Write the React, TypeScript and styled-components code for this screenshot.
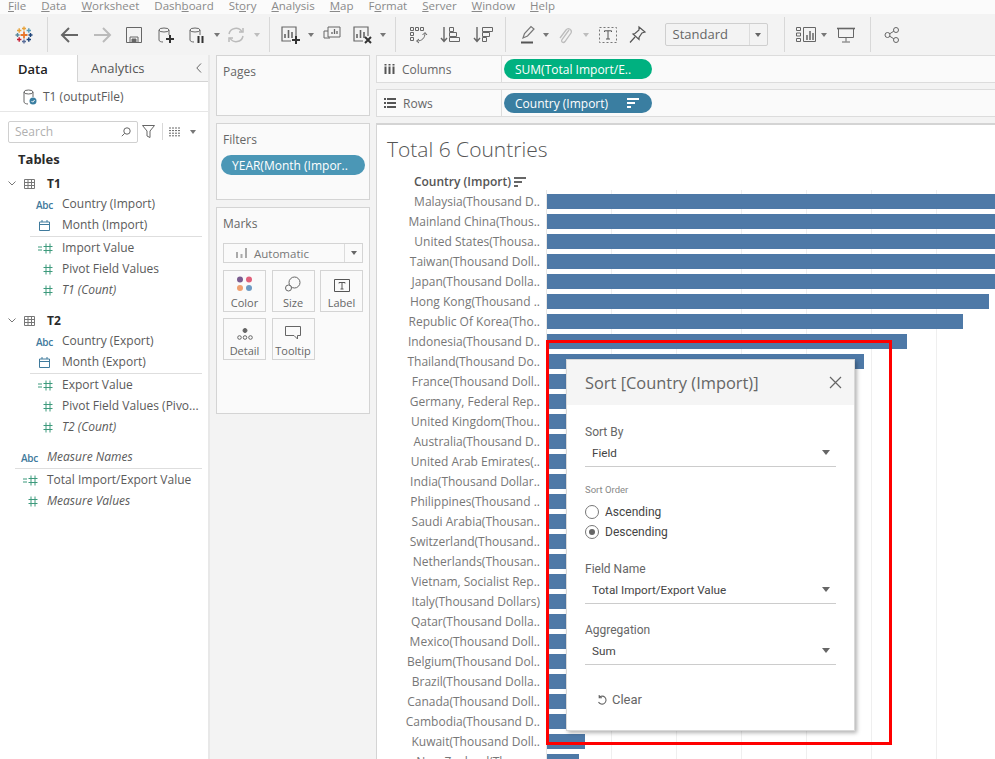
import React from 'react';
import styled, { createGlobalStyle } from 'styled-components';

const GlobalStyle = createGlobalStyle`
	html, body { margin: 0; padding: 0; background: #fff; }
	body { font-family: 'Open Sans', 'Liberation Sans', sans-serif; font-size: 12px; color: #555; }
	* { box-sizing: border-box; }
`;

const Page = styled.div`
	position: relative;
	width: 995px;
	height: 759px;
	overflow: hidden;
	display: flex;
	flex-direction: column;
	background: #f3f3f3;
`;

const MenuBar = styled.div`
	height: 14px;
	flex: none;
	display: flex;
	gap: 15px;
	padding-left: 8px;
	background: #fbfbfb;
	overflow: hidden;
	font-size: 11.5px;
	line-height: 11px;
	color: #8a8a8a;
	u { text-underline-offset: 1px; }
`;

const Toolbar = styled.div`
	height: 41px;
	flex: none;
	display: flex;
	align-items: center;
	background: #f3f3f3;
`;

const ToolSlot = styled.div<{ $w: number }>`
	width: ${(p) => p.$w}px;
	height: 32px;
	flex: none;
	display: flex;
	align-items: center;
	justify-content: center;
`;

const ToolSep = styled.div`
	width: 1px;
	height: 35px;
	flex: none;
	background: #d8d8d8;
`;

const Caret = styled.div<{ $off?: boolean; $dark?: boolean }>`
	width: 0;
	height: 0;
	border-left: 3.5px solid transparent;
	border-right: 3.5px solid transparent;
	border-top: 4px solid ${(p) => (p.$off ? '#bdbdbd' : p.$dark ? '#666' : '#777')};
`;

const ViewSelect = styled.div`
	width: 103px;
	height: 23px;
	margin: 0 16px 0 11.5px;
	flex: none;
	display: flex;
	align-items: center;
	border: 1px solid #cfcfcf;
	border-radius: 2px;
	font-size: 13px;
	color: #666;
	span { flex: 1; padding: 0 0 1px 7px; }
	div.end { width: 18px; height: 100%; border-left: 1px solid #dcdcdc; display: flex; align-items: center; justify-content: center; }
`;

const Body = styled.div`
	flex: 1;
	display: flex;
	min-height: 0;
`;

const DataPane = styled.div`
	width: 210px;
	flex: none;
	background: #fff;
	border-right: 2px solid #e8e8e8;
`;

const TabRow = styled.div`
	height: 27px;
	display: flex;
	align-items: center;
	background: #f5f5f5;
`;

const Tab = styled.div<{ $active?: boolean }>`
	height: 27px;
	width: ${(p) => (p.$active ? '78px' : 'auto')};
	flex: ${(p) => (p.$active ? 'none' : '1')};
	display: flex;
	align-items: center;
	padding-left: ${(p) => (p.$active ? '18px' : '13px')};
	padding-right: 6px;
	justify-content: ${(p) => (p.$active ? 'flex-start' : 'space-between')};
	font-size: 13px;
	font-weight: ${(p) => (p.$active ? 600 : 400)};
	color: ${(p) => (p.$active ? '#222' : '#555')};
	background: ${(p) => (p.$active ? '#fff' : '#f5f5f5')};
	border-right: ${(p) => (p.$active ? '1px solid #d4d4d4' : 'none')};
	border-bottom: ${(p) => (p.$active ? 'none' : '1px solid #d4d4d4')};
`;

const SourceRow = styled.div`
	height: 30px;
	display: flex;
	align-items: center;
	gap: 6px;
	padding-left: 23px;
	border-bottom: 1px solid #e6e6e6;
	color: #5a5a5a;
	font-size: 12px;
`;

const SearchRow = styled.div`
	height: 21px;
	margin-top: 9px;
	padding-left: 8px;
	display: flex;
	align-items: center;
`;

const SearchBox = styled.div`
	width: 130px;
	height: 22px;
	flex: none;
	display: flex;
	align-items: center;
	justify-content: space-between;
	padding: 0 6px;
	border: 1px solid #d0d0d0;
	border-radius: 2px;
	color: #b0b0b0;
	font-size: 12px;
`;

const SearchTools = styled.div`
	display: flex;
	align-items: center;
	gap: 6px;
	margin-left: 4px;
	i { width: 1px; height: 17px; background: #d8d8d8; margin: 0 0 0 1px; }
`;

const TablesTitle = styled.div`
	margin: 7px 0 4px 18px;
	height: 20px;
	line-height: 20px;
	font-weight: 700;
	font-size: 13px;
	color: #2a2a2a;
`;

const TableHead = styled.div<{ $gap?: number }>`
	height: 21px;
	margin-top: ${(p) => p.$gap ?? 0}px;
	display: flex;
	align-items: center;
	padding-left: 8px;
	gap: 8px;
	font-weight: 700;
	font-size: 12px;
	color: #2a2a2a;
	span { margin-left: 4px; }
`;

const FieldRow = styled.div<{ $outer?: boolean }>`
	height: 21px;
	display: flex;
	align-items: center;
	padding-left: ${(p) => (p.$outer ? '15px' : '30px')};
	white-space: nowrap;
`;

const FieldIcon = styled.div`
	width: 29px;
	flex: none;
	display: flex;
	align-items: center;
	justify-content: center;
`;

const AbcMark = styled.span`
	font-size: 10px;
	color: #3f7a9c;
	font-weight: 600;
	letter-spacing: -0.2px;
`;

const FieldName = styled.span<{ $italic?: boolean }>`
	margin-left: 3px;
	padding-bottom: 2px;
	font-size: 12px;
	color: #5a5a5a;
	font-style: ${(p) => (p.$italic ? 'italic' : 'normal')};
`;

const FieldRule = styled.div<{ $outer?: boolean }>`
	height: 1px;
	margin: 0 6px 1px ${(p) => (p.$outer ? '15px' : '30px')};
	background: #dedede;
`;

const GroupGap = styled.div`
	height: 9px;
`;

const CardColumn = styled.div`
	width: 166px;
	flex: none;
	padding: 0 6px 0 6px;
	display: flex;
	flex-direction: column;
`;

const Card = styled.div<{ $h: number; $mt?: number }>`
	height: ${(p) => p.$h}px;
	margin-top: ${(p) => p.$mt ?? 0}px;
	flex: none;
	padding: 7px 6px;
	background: #fafafa;
	border: 1px solid #d4d4d4;
	font-size: 12px;
	color: #666;
`;

const Pill = styled.div<{ $bg: string; $w: number }>`
	width: ${(p) => p.$w}px;
	height: 20px;
	flex: none;
	display: flex;
	align-items: center;
	justify-content: space-between;
	padding: 0 12px 0 11px;
	border-radius: 10px;
	background: ${(p) => p.$bg};
	color: #fff;
	font-size: 12px;
	white-space: nowrap;
`;

const FilterPill = styled(Pill)`
	margin: 7px 0 0 -2px;
`;

const MarkSelect = styled.div`
	height: 20px;
	margin-top: 11px;
	display: flex;
	align-items: center;
	background: #fafafa;
	border: 1px solid #d4d4d4;
	font-size: 11.5px;
	color: #777;
	span { flex: 1; padding-left: 12px; display: flex; align-items: center; gap: 7px; }
	div.end { width: 18px; height: 100%; border-left: 1px solid #dcdcdc; display: flex; align-items: center; justify-content: center; }
`;

const MarkGrid = styled.div`
	display: grid;
	grid-template-columns: repeat(3, 43px);
	grid-auto-rows: 42px;
	column-gap: 5.5px;
	row-gap: 6px;
	margin-top: 7px;
`;

const MarkTile = styled.div`
	display: flex;
	flex-direction: column;
	align-items: center;
	justify-content: flex-end;
	padding-bottom: 1px;
	gap: 3px;
	background: #fafafa;
	border: 1px solid #d4d4d4;
	font-size: 11px;
	color: #666;
`;

const MainColumn = styled.div`
	flex: 1;
	min-width: 0;
	display: flex;
	flex-direction: column;
`;

const Shelf = styled.div<{ $mt?: number }>`
	height: 28px;
	margin-top: ${(p) => p.$mt ?? 0}px;
	flex: none;
	display: flex;
	align-items: center;
	background: #fafafa;
	border: 1px solid #dcdcdc;
	border-right: none;
`;

const ShelfLabel = styled.div`
	width: 125px;
	height: 100%;
	flex: none;
	display: flex;
	align-items: center;
	gap: 7px;
	padding-left: 7px;
	margin-right: 2px;
	border-right: 1px solid #dcdcdc;
	font-size: 12px;
	color: #666;
`;

const ViewPane = styled.div`
	flex: 1;
	margin-top: 6px;
	min-height: 0;
	padding: 11px 0 0 10px;
	background: #fff;
	border-top: 2px solid #d4d4d4;
	border-left: 1px solid #d4d4d4;
	overflow: hidden;
`;

const ViewTitle = styled.div`
	height: 27px;
	line-height: 27px;
	font-size: 21px;
	font-weight: 300;
	color: #555;
`;

const ColumnHead = styled.div`
	width: 140px;
	height: 17px;
	margin-top: 10px;
	display: flex;
	align-items: center;
	justify-content: flex-end;
	gap: 3px;
	font-size: 12px;
	font-weight: 600;
	color: #555;
	white-space: nowrap;
`;

const ChartRow = styled.div`
	height: 20px;
	display: flex;
	margin-left: -1px;
`;

const RowLabel = styled.div`
	width: 160px;
	flex: none;
	padding: 3px 6px 0 0;
	text-align: right;
	font-size: 12px;
	line-height: 18px;
	color: #777;
	white-space: nowrap;
	overflow: hidden;
`;

const Plot = styled.div`
	flex: 1;
	padding-top: 4px;
	border-left: 1px solid #e6e6e6;
	background: repeating-linear-gradient(to right, transparent 0 64px, #efefef 64px 65px);
`;

const Bar = styled.div`
	height: 15px;
	background: #4e79a7;
`;

const Dialog = styled.div`
	position: absolute;
	left: 566px;
	top: 359px;
	width: 289px;
	height: 372px;
	background: #fff;
	border: 1px solid #d8d8d8;
	box-shadow: 2px 2px 4px rgba(0, 0, 0, 0.3);
	font-family: Roboto, 'Liberation Sans', sans-serif;
`;

const DialogHead = styled.div`
	height: 45px;
	display: flex;
	align-items: center;
	justify-content: space-between;
	padding: 0 12px 0 18px;
	background: #f5f5f5;
	font-family: 'Open Sans', sans-serif;
	font-size: 16.4px;
	color: #666;
`;

const DialogBody = styled.div`
	padding: 19px 18px 0 18px;
`;

const SelectLabel = styled.div<{ $mt?: number }>`
	height: 16px;
	margin-top: ${(p) => p.$mt ?? 0}px;
	line-height: 16px;
	font-size: 12px;
	color: #666;
`;

const SelectLine = styled.div`
	height: 27px;
	display: flex;
	align-items: center;
	justify-content: space-between;
	padding: 0 6px 1px 7px;
	border-bottom: 1px solid #cccccc;
	font-size: 11.7px;
	color: #444;
`;

const SelectCaret = styled.div`
	width: 0;
	height: 0;
	border-left: 4.5px solid transparent;
	border-right: 4.5px solid transparent;
	border-top: 5px solid #666;
`;

const SmallLabel = styled.div`
	margin-top: 17px;
	height: 12px;
	line-height: 12px;
	font-size: 9.5px;
	color: #888;
`;

const RadioRow = styled.div`
	height: 20px;
	display: flex;
	align-items: center;
	gap: 6px;
	font-size: 12px;
	color: #444;
`;

const RadioDot = styled.div<{ $on?: boolean }>`
	width: 14px;
	height: 14px;
	flex: none;
	border-radius: 50%;
	border: 1px solid #777;
	display: flex;
	align-items: center;
	justify-content: center;
	&::after {
		content: '';
		width: 6px;
		height: 6px;
		border-radius: 50%;
		background: ${(p) => (p.$on ? '#666' : 'transparent')};
	}
`;

const RadioGroup = styled.div`
	margin-top: 6px;
`;

const ClearButton = styled.div`
	margin: 27px 0 0 11px;
	display: flex;
	align-items: center;
	gap: 4px;
	font-size: 13px;
	color: #666;
`;

const RedBox = styled.div`
	position: absolute;
	left: 546px;
	top: 340px;
	width: 346px;
	height: 405px;
	border: 3px solid #f00;
	pointer-events: none;
`;

const Svg = ({ w = 20, h = 20, children }: { w?: number; h?: number; children: React.ReactNode }) => (
	<svg width={w} height={h} viewBox={`0 0 ${w} ${h}`} fill='none' stroke='#666' strokeWidth='1'>
		{children}
	</svg>
);

const cross = (x: number, y: number, r: number, c: string, sw = 1.4) => (
	<path d={`M${x - r} ${y}H${x + r}M${x} ${y - r}V${y + r}`} stroke={c} strokeWidth={sw} />
);

const TableauLogo = () => (
	<Svg w={18} h={18}>
		{cross(9, 9, 3.5, '#e8762b', 1.8)}
		{cross(9, 2.5, 2, '#e8a33b')}
		{cross(9, 15.5, 2, '#5b6f9a')}
		{cross(2.5, 9, 2, '#59879b')}
		{cross(15.5, 9, 2, '#1f447a')}
		{cross(4.2, 4.5, 2.2, '#e8a33b')}
		{cross(13.8, 4.5, 2.2, '#5a9bb5')}
		{cross(4.2, 13.5, 2.2, '#c72035')}
		{cross(13.8, 13.5, 2.2, '#1f447a')}
	</Svg>
);

const Cylinder = ({ c = '#666' }: { c?: string }) => (
	<g stroke={c}>
		<ellipse cx='7' cy='4' rx='5' ry='2' />
		<path d='M2 4V14C2 15.3 4 16 6 16M12 4V9' />
	</g>
);

const BarsFrame = ({ x = 1 }: { x?: number }) => (
	<g>
		<path d={`M${x + 14} 11V2H${x}V16H${x + 9}`} strokeWidth='1.2' />
		<path d={`M${x + 3} 13V9M${x + 6.5} 13V5M${x + 10} 13V7`} strokeWidth='1.6' />
	</g>
);

const SortLines = ({ stroke = '#666' }: { stroke?: string }) => (
	<svg width='13' height='10' viewBox='0 0 13 10' fill='none' stroke={stroke} strokeWidth='2'>
		<path d='M0 1H12M0 5H8M0 9H4' />
	</svg>
);

const Hash = ({ calc }: { calc?: boolean }) => (
	<svg width='16' height='11' viewBox='0 0 16 11' fill='none' stroke='#3d9a7c' strokeWidth='1'>
		<path d='M9 0.5V10.5M13 0.5V10.5M6.5 3.5H15.5M6.5 7.5H15.5' />
		{calc && <path d='M1 4H5M1 7H5' />}
	</svg>
);

const CalendarMark = () => (
	<svg width='11' height='11' viewBox='0 0 11 11' fill='none' stroke='#3f7a9c' strokeWidth='1'>
		<path d='M.5 2H10.5V10.5H.5ZM.5 4.5H10.5M3 0V2M8 0V2' />
	</svg>
);

const TableMark = () => (
	<svg width='11' height='10' viewBox='0 0 11 10' fill='none' stroke='#777' strokeWidth='1'>
		<path d='M.5 .5H10.5V9.5H.5ZM.5 3.5H10.5M.5 6.5H10.5M4 .5V9.5M7.5 .5V9.5' />
	</svg>
);

const Chevron = () => (
	<svg width='8' height='5' viewBox='0 0 8 5' fill='none' stroke='#777' strokeWidth='1'>
		<path d='M.5 .5L4 4L7.5 .5' />
	</svg>
);

type Field = { kind: 'abc' | 'date' | 'hash' | 'calc'; name: string; italic?: boolean };

const FieldLine = ({ field, outer }: { field: Field; outer?: boolean }) => (
	<FieldRow $outer={outer}>
		<FieldIcon>
			{field.kind === 'abc' && <AbcMark>Abc</AbcMark>}
			{field.kind === 'date' && <CalendarMark />}
			{field.kind === 'hash' && <Hash />}
			{field.kind === 'calc' && <Hash calc />}
		</FieldIcon>
		<FieldName $italic={field.italic}>{field.name}</FieldName>
	</FieldRow>
);

const rows: [string, number][] = [
	['Malaysia(Thousand D..', 460],
	['Mainland China(Thous..', 460],
	['United States(Thousa..', 460],
	['Taiwan(Thousand Doll..', 460],
	['Japan(Thousand Dolla..', 460],
	['Hong Kong(Thousand ..', 442],
	['Republic Of Korea(Tho..', 416],
	['Indonesia(Thousand D..', 360],
	['Thailand(Thousand Do..', 317],
	['France(Thousand Doll..', 120],
	['Germany, Federal Rep..', 110],
	['United Kingdom(Thou..', 100],
	['Australia(Thousand D..', 95],
	['United Arab Emirates(..', 90],
	['India(Thousand Dollar..', 85],
	['Philippines(Thousand ..', 80],
	['Saudi Arabia(Thousan..', 75],
	['Switzerland(Thousand..', 70],
	['Netherlands(Thousan..', 66],
	['Vietnam, Socialist Rep..', 62],
	['Italy(Thousand Dollars)', 58],
	['Qatar(Thousand Dolla..', 54],
	['Mexico(Thousand Doll..', 50],
	['Belgium(Thousand Dol..', 48],
	['Brazil(Thousand Dolla..', 46],
	['Canada(Thousand Doll..', 44],
	['Cambodia(Thousand D..', 42],
	['Kuwait(Thousand Doll..', 38],
	['New Zealand(Thousa..', 32],
];

const menus: [string, string, string][] = [
	['', 'F', 'ile'],
	['', 'D', 'ata'],
	['', 'W', 'orksheet'],
	['Dash', 'b', 'oard'],
	['St', 'o', 'ry'],
	['', 'A', 'nalysis'],
	['', 'M', 'ap'],
	['F', 'o', 'rmat'],
	['', 'S', 'erver'],
	['', 'W', 'indow'],
	['', 'H', 'elp'],
];

export default function App() {
	return (
		<Page>
			<GlobalStyle />
			<MenuBar>
				{menus.map(([a, b, c]) => (
					<span key={a + b + c}>
						{a}
						<u>{b}</u>
						{c}
					</span>
				))}
			</MenuBar>

			<Toolbar>
				<ToolSlot $w={47}><TableauLogo /></ToolSlot>
				<ToolSep />
				<ToolSlot $w={6} />
				<ToolSlot $w={32}>
					<Svg><path d='M2 10H18M9 3L2 10L9 17' strokeWidth='2' /></Svg>
				</ToolSlot>
				<ToolSlot $w={32}>
					<Svg><path d='M2 10H18M11 3L18 10L11 17' stroke='#bbb' strokeWidth='2' /></Svg>
				</ToolSlot>
				<ToolSlot $w={32}>
					<Svg w={16} h={16}><path d='M.5 .5H15.5V15.5H.5ZM4 15V10H12V15' /><path d='M6 12H10V15H6Z' fill='#666' /></Svg>
				</ToolSlot>
				<ToolSlot $w={31}>
					<Svg w={18} h={18}><Cylinder /><path d='M9 13H17M13 9V17' stroke='#333' strokeWidth='2' /></Svg>
				</ToolSlot>
				<ToolSlot $w={31}>
					<Svg w={18} h={18}><Cylinder /><path d='M10.5 10V17M14.5 10V17' stroke='#333' strokeWidth='2' /></Svg>
				</ToolSlot>
				<ToolSlot $w={9}><Caret /></ToolSlot>
				<ToolSlot $w={30}>
					<Svg w={18} h={18}>
						<path d='M2 8A7 7 0 0 1 15 6M16 10A7 7 0 0 1 3 12' stroke='#bbb' strokeWidth='1.5' />
						<path d='M16 2V6H12M2 16V12H6' stroke='#bbb' strokeWidth='1.5' />
					</Svg>
				</ToolSlot>
				<ToolSlot $w={11}><Caret $off /></ToolSlot>
				<ToolSlot $w={7} />
				<ToolSep />
				<ToolSlot $w={10} />
				<ToolSlot $w={21}>
					<Svg><BarsFrame x={1} /><path d='M11 15H19M15 11V19' stroke='#333' strokeWidth='2' /></Svg>
				</ToolSlot>
				<ToolSlot $w={19}><Caret /></ToolSlot>
				<ToolSlot $w={23}>
					<Svg w={18} h={18}>
						<path d='M7 12H1V5H5' />
						<path d='M5 1H17V11H5Z' />
						<path d='M9 8V6M11.5 8V3M14 8V5' strokeWidth='1.3' />
					</Svg>
				</ToolSlot>
				<ToolSlot $w={9} />
				<ToolSlot $w={21}>
					<Svg><BarsFrame x={1} /><path d='M12 12L18 18M18 12L12 18' stroke='#333' strokeWidth='2' /></Svg>
				</ToolSlot>
				<ToolSlot $w={20}><Caret /></ToolSlot>
				<ToolSlot $w={2} />
				<ToolSep />
				<ToolSlot $w={11} />
				<ToolSlot $w={21}>
					<Svg>
						<path d='M2.5 2.5H5.5V5.5H2.5ZM7.5 2.5H10.5V5.5H7.5ZM12.5 2.5H15.5V5.5H12.5ZM2.5 7.5H5.5V10.5H2.5ZM2.5 12.5H5.5V15.5H2.5Z' />
						<path d='M17 8C17 13 14 16 9 16M14.5 10L17 7.5L19 10M11 14L8.5 16L11 18' />
					</Svg>
				</ToolSlot>
				<ToolSlot $w={44}>
					<Svg>
						<path d='M4 2V16M1 13L4 16.5L7 13' strokeWidth='1.4' />
						<path d='M9.5 2.5H13.5V6.5H9.5ZM9.5 7.5H16.5V11.5H9.5ZM9.5 12.5H19.5V16.5H9.5Z' />
					</Svg>
				</ToolSlot>
				<ToolSlot $w={21}>
					<Svg>
						<path d='M4 2V16M1 13L4 16.5L7 13' strokeWidth='1.4' />
						<path d='M9.5 2.5H19.5V6.5H9.5ZM9.5 7.5H16.5V11.5H9.5ZM9.5 12.5H13.5V16.5H9.5Z' />
					</Svg>
				</ToolSlot>
				<ToolSlot $w={12} />
				<ToolSep />
				<ToolSlot $w={12} />
				<ToolSlot $w={20}>
					<Svg>
						<path d='M5 13L6.5 8.5L13 1.5L16 4L9.5 11L5 13Z' stroke='#777' strokeWidth='1.2' />
						<path d='M3 17.5H15' stroke='#555' strokeWidth='2' />
					</Svg>
				</ToolSlot>
				<ToolSlot $w={15}><Caret /></ToolSlot>
				<ToolSlot $w={24}>
					<Svg>
						<path d='M14 5L7 14.5C5.5 17 8.5 18.5 10 16.5L16 8C17.5 5 13.5 2 11 5L5 13' stroke='#bdbdbd' strokeWidth='1.3' />
					</Svg>
				</ToolSlot>
				<ToolSlot $w={17}><Caret $off /></ToolSlot>
				<ToolSlot $w={27}>
					<Svg w={18} h={16}>
						<path d='M.5 .5H17.5V15.5H.5Z' strokeDasharray='2 2' stroke='#777' />
						<path d='M5.5 5V3.8H12.5V5M9 3.8V12M7 12H11' stroke='#555' />
					</Svg>
				</ToolSlot>
				<ToolSlot $w={32}>
					<Svg>
						<path d='M12 2L18 7L15 8L12 12.5L12 14.5L6 9L8 8.5L12 5ZM8 12L3 17.5' stroke='#555' strokeWidth='1.2' />
					</Svg>
				</ToolSlot>
				<ViewSelect>
					<span>Standard</span>
					<div className='end'><Caret $dark /></div>
				</ViewSelect>
				<ToolSep />
				<ToolSlot $w={11.5} />
				<ToolSlot $w={20}>
					<Svg w={20} h={15}>
						<path d='M.5 .5H4.5V3.5H.5ZM.5 6H4.5V9H.5ZM.5 11.5H4.5V14.5H.5ZM7.5 .5H19.5V14.5H7.5Z' />
						<path d='M11 13V8M14 13V4M17 13V6' strokeWidth='1.5' />
					</Svg>
				</ToolSlot>
				<ToolSlot $w={15}><Caret /></ToolSlot>
				<ToolSlot $w={29}>
					<Svg w={18} h={16}>
						<path d='M0 1.5H18' strokeWidth='1.6' />
						<path d='M1.5 1.5V10.5H16.5V1.5M9 10.5V14.5M5 15H13' />
					</Svg>
				</ToolSlot>
				<ToolSlot $w={9.5} />
				<ToolSep />
				<ToolSlot $w={43}>
					<Svg w={16} h={16}>
						<circle cx='3.5' cy='8' r='2.5' />
						<circle cx='12' cy='3' r='2.5' />
						<circle cx='12' cy='13' r='2.5' />
						<path d='M5.7 6.8L9.8 4.2M5.7 9.2L9.8 11.8' />
					</Svg>
				</ToolSlot>
			</Toolbar>

			<Body>
				<DataPane>
					<TabRow>
						<Tab $active>Data</Tab>
						<Tab>
							Analytics
							<svg width='6' height='10' viewBox='0 0 6 10' fill='none' stroke='#666'>
								<path d='M5 .5L.8 5L5 9.5' />
							</svg>
						</Tab>
					</TabRow>
					<SourceRow>
						<svg width='14' height='16' viewBox='0 0 14 16' fill='none' stroke='#666'>
							<ellipse cx='5.5' cy='3' rx='4.5' ry='2' />
							<path d='M1 3V13C1 14 3 15 5 15M10 3V8' />
							<circle cx='10' cy='12' r='3.5' fill='#3a7ea1' stroke='none' />
							<path d='M8.5 12L9.7 13.2L11.6 11' stroke='#fff' />
						</svg>
						T1 (outputFile)
					</SourceRow>
					<SearchRow>
						<SearchBox>
							Search
							<svg width='10' height='10' viewBox='0 0 10 10' fill='none' stroke='#666'>
								<circle cx='6' cy='4' r='3.2' />
								<path d='M3.6 6.4L.8 9.2' />
							</svg>
						</SearchBox>
						<SearchTools>
							<svg width='13' height='13' viewBox='0 0 13 13' fill='none' stroke='#666'>
								<path d='M.5 .5H12.5L8 6V12.5L5 11V6Z' />
							</svg>
							<i />
							<svg width='12' height='10' viewBox='0 0 12 10' fill='none' stroke='#666'>
								<path d='M0 1H2M3 1H12M0 3.6H2M3 3.6H12M0 6.2H2M3 6.2H12M0 8.8H2M3 8.8H12' strokeDasharray='2 1' />
							</svg>
							<ToolSlot $w={12}><Caret /></ToolSlot>
						</SearchTools>
					</SearchRow>
					<TablesTitle>Tables</TablesTitle>
					<TableHead><Chevron /><TableMark /><span>T1</span></TableHead>
					<FieldLine field={{ kind: 'abc', name: 'Country (Import)' }} />
					<FieldLine field={{ kind: 'date', name: 'Month (Import)' }} />
					<FieldRule />
					<FieldLine field={{ kind: 'calc', name: 'Import Value' }} />
					<FieldLine field={{ kind: 'hash', name: 'Pivot Field Values' }} />
					<FieldLine field={{ kind: 'hash', name: 'T1 (Count)', italic: true }} />
					<TableHead $gap={9}><Chevron /><TableMark /><span>T2</span></TableHead>
					<FieldLine field={{ kind: 'abc', name: 'Country (Export)' }} />
					<FieldLine field={{ kind: 'date', name: 'Month (Export)' }} />
					<FieldRule />
					<FieldLine field={{ kind: 'calc', name: 'Export Value' }} />
					<FieldLine field={{ kind: 'hash', name: 'Pivot Field Values (Pivo...' }} />
					<FieldLine field={{ kind: 'hash', name: 'T2 (Count)', italic: true }} />
					<GroupGap />
					<FieldLine outer field={{ kind: 'abc', name: 'Measure Names', italic: true }} />
					<FieldRule $outer />
					<FieldLine outer field={{ kind: 'calc', name: 'Total Import/Export Value' }} />
					<FieldLine outer field={{ kind: 'hash', name: 'Measure Values', italic: true }} />
				</DataPane>

				<CardColumn>
					<Card $h={61}>Pages</Card>
					<Card $h={77} $mt={7}>
						Filters
						<FilterPill $bg='#4b97b6' $w={144}>YEAR(Month (Impor..</FilterPill>
					</Card>
					<Card $h={207} $mt={7}>
						Marks
						<MarkSelect>
							<span>
								<svg width='11' height='10' viewBox='0 0 11 10' fill='none' stroke='#aaa' strokeWidth='2'>
									<path d='M1 10V4M5.5 10V6M10 10V0' />
								</svg>
								Automatic
							</span>
							<div className='end'><Caret $dark /></div>
						</MarkSelect>
						<MarkGrid>
							<MarkTile>
								<svg width='18' height='16' viewBox='0 0 18 16'>
									<circle cx='4' cy='3.5' r='3' fill='#7b5c90' />
									<circle cx='13' cy='3.5' r='3' fill='#e0607a' />
									<circle cx='4' cy='12' r='3' fill='#f0a070' />
									<circle cx='13' cy='12' r='3' fill='#6d9ac4' />
								</svg>
								Color
							</MarkTile>
							<MarkTile>
								<svg width='16' height='16' viewBox='0 0 16 16' fill='none' stroke='#666'>
									<circle cx='9.5' cy='6.5' r='5.5' />
									<circle cx='3.5' cy='12' r='3' fill='#fafafa' />
								</svg>
								Size
							</MarkTile>
							<MarkTile>
								<svg width='16' height='13' viewBox='0 0 16 13' fill='none' stroke='#555'>
									<path d='M.5 .5H15.5V12.5H.5ZM5 4.5V3.5H11V4.5M8 3.5V10M6.5 10H9.5' />
								</svg>
								Label
							</MarkTile>
							<MarkTile>
								<svg width='16' height='12' viewBox='0 0 16 12' fill='none' stroke='#666'>
									<circle cx='8' cy='2.5' r='2' fill='#666' />
									<circle cx='2.5' cy='9.5' r='1.8' />
									<circle cx='8' cy='9.5' r='1.8' />
									<circle cx='13.5' cy='9.5' r='1.8' />
								</svg>
								Detail
							</MarkTile>
							<MarkTile>
								<svg width='16' height='14' viewBox='0 0 16 14' fill='none' stroke='#666'>
									<path d='M.5 .5H15.5V9.5H12.5V13L9 9.5H.5Z' />
								</svg>
								Tooltip
							</MarkTile>
						</MarkGrid>
					</Card>
				</CardColumn>

				<MainColumn>
					<Shelf>
						<ShelfLabel>
							<svg width='11' height='10' viewBox='0 0 11 10' fill='none' stroke='#555' strokeWidth='2'>
								<path d='M1.5 0V10M5.5 0V10M9.5 0V10' strokeDasharray='1.5 1 8' />
							</svg>
							Columns
						</ShelfLabel>
						<Pill $bg='#00b180' $w={148}>SUM(Total Import/E..</Pill>
					</Shelf>
					<Shelf $mt={6}>
						<ShelfLabel>
							<svg width='12' height='10' viewBox='0 0 12 10' fill='none' stroke='#555' strokeWidth='2'>
								<path d='M0 1H2M3 1H12M0 5H2M3 5H12M0 9H2M3 9H12' />
							</svg>
							Rows
						</ShelfLabel>
						<Pill $bg='#3a7ea1' $w={148}>
							Country (Import)
							<SortLines stroke='#fff' />
						</Pill>
					</Shelf>
					<ViewPane>
						<ViewTitle>Total 6 Countries</ViewTitle>
						<ColumnHead>
							Country (Import)
							<SortLines />
						</ColumnHead>
						{rows.map(([label, width]) => (
							<ChartRow key={label}>
								<RowLabel>{label}</RowLabel>
								<Plot>
									<Bar style={{ width }} />
								</Plot>
							</ChartRow>
						))}
					</ViewPane>
				</MainColumn>
			</Body>

			<RedBox />
			<Dialog>
				<DialogHead>
					Sort [Country (Import)]
					<svg width='13' height='13' viewBox='0 0 13 13' fill='none' stroke='#666' strokeWidth='1.2'>
						<path d='M1 1L12 12M12 1L1 12' />
					</svg>
				</DialogHead>
				<DialogBody>
					<SelectLabel>Sort By</SelectLabel>
					<SelectLine>Field<SelectCaret /></SelectLine>
					<SmallLabel>Sort Order</SmallLabel>
					<RadioGroup>
						<RadioRow><RadioDot />Ascending</RadioRow>
						<RadioRow><RadioDot $on />Descending</RadioRow>
					</RadioGroup>
					<SelectLabel $mt={19}>Field Name</SelectLabel>
					<SelectLine>Total Import/Export Value<SelectCaret /></SelectLine>
					<SelectLabel $mt={18}>Aggregation</SelectLabel>
					<SelectLine>Sum<SelectCaret /></SelectLine>
					<ClearButton>
						<svg width='12' height='12' viewBox='0 0 12 12' fill='none' stroke='#666' strokeWidth='1.1'>
							<path d='M3 3.5A4 4 0 1 1 2.5 8M3.2 1V3.8H6' />
						</svg>
						Clear
					</ClearButton>
				</DialogBody>
			</Dialog>
		</Page>
	);
}
